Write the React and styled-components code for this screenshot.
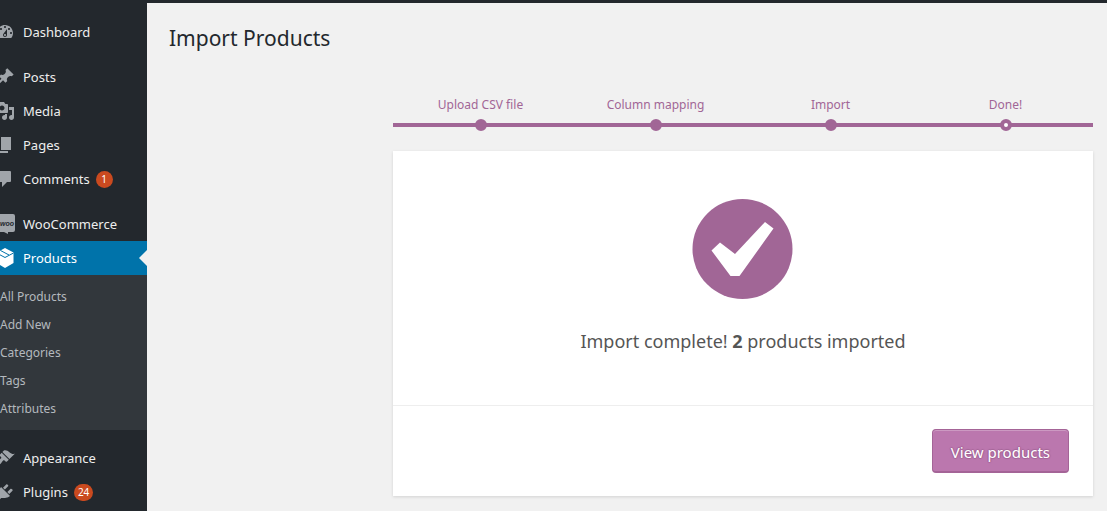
import styled, { createGlobalStyle, css } from "styled-components";

const GlobalStyle = createGlobalStyle`
  * {
    box-sizing: border-box;
  }
  body {
    margin: 0;
    background: #f1f1f1;
    color: #444;
    font-family: "Noto Sans", "Open Sans", sans-serif;
    font-size: 13px;
  }
`;

const Page = styled.div`
  min-height: 100vh;
  display: flex;
  flex-direction: column;
`;

const AdminBar = styled.div`
  height: 3px;
  background: #23282d;
`;

const Body = styled.div`
  flex: 1;
  display: flex;
`;

const Sidebar = styled.nav`
  flex: 0 0 147px;
  padding-top: 12px;
  background: #23282d;
  overflow: hidden;
`;

const Menu = styled.ul`
  margin: 0;
  padding: 0;
  list-style: none;
`;

const MenuItem = styled.li`
  margin-top: ${(props) => (props.$spaced ? "11px" : "0")};
`;

const MenuLink = styled.a`
  position: relative;
  display: flex;
  align-items: center;
  gap: 8px;
  height: 34px;
  color: #eee;
  font-size: 13px;
  line-height: 18px;
  text-decoration: none;
  white-space: nowrap;

  ${(props) =>
    props.$current &&
    css`
      background: #0073aa;
      color: #fff;

      &::after {
        content: "";
        position: absolute;
        right: 0;
        top: 9px;
        border: 8px solid transparent;
        border-left-width: 0;
        border-right-color: #f1f1f1;
      }
    `}
`;

const IconBox = styled.span`
  flex: 0 0 15px;
  display: flex;
  justify-content: flex-end;
  overflow: hidden;
  color: ${(props) => (props.$current ? "#fff" : "#a0a5aa")};

  svg {
    flex: none;
    fill: currentColor;
  }
`;

const Count = styled.span`
  min-width: 17px;
  height: 17px;
  margin-left: -2px;
  padding: 0 4px;
  border-radius: 9px;
  background: #ca4a1f;
  color: #fff;
  font-size: 10px;
  line-height: 17px;
  text-align: center;
`;

const SubMenu = styled.ul`
  margin: 0;
  padding: 8px 0 7px;
  background: #32373c;
  list-style: none;
`;

const SubLink = styled.a`
  display: block;
  color: #b4b9be;
  font-size: 12px;
  line-height: 28px;
  text-decoration: none;
`;

const Content = styled.main`
  flex: 1;
  min-width: 0;
  padding: 20px 14px 15px 22px;
`;

const Title = styled.h1`
  margin: 0;
  color: #23282d;
  font-size: 21px;
  font-weight: 400;
  line-height: 30px;
`;

const Wizard = styled.div`
  max-width: 700px;
  margin: 40px 0 0 auto;
`;

const Steps = styled.ol`
  display: flex;
  margin: 0 0 20px;
  padding: 0;
  list-style: none;
`;

const Step = styled.li`
  flex: 1;
  display: flex;
  flex-direction: column;
  align-items: center;
  color: #a16696;
  font-size: 12px;
  line-height: 24px;
`;

const Track = styled.div`
  align-self: stretch;
  display: flex;
  align-items: center;
  justify-content: center;
  height: 12px;
  margin-top: 2px;
  background: linear-gradient(#a16696, #a16696) center / 100% 4px no-repeat;
`;

const Dot = styled.span`
  width: 12px;
  height: 12px;
  border: 4px solid #a16696;
  border-radius: 50%;
  background: ${(props) => (props.$active ? "#fff" : "#a16696")};
`;

const Card = styled.section`
  background: #fff;
  box-shadow: 0 1px 3px rgba(0, 0, 0, 0.13);
`;

const Result = styled.div`
  display: flex;
  flex-direction: column;
  align-items: center;
  padding: 48px 24px;
`;

const Message = styled.p`
  margin: 27px 0 0;
  color: #555;
  font-size: 18px;
  line-height: 31px;
  text-align: center;
`;

const Actions = styled.div`
  display: flex;
  justify-content: flex-end;
  padding: 23px 24px;
  border-top: 1px solid #eee;
`;

const Button = styled.button`
  height: 44px;
  padding: 2px 18px 0;
  border: 1px solid #a46497;
  border-bottom-width: 2px;
  border-radius: 4px;
  background: #bb77ae;
  box-shadow: inset 0 1px 0 rgba(255, 255, 255, 0.25);
  color: #fff;
  font-family: inherit;
  font-size: 15px;
  text-shadow: 0 -1px 1px #a36597, 1px 0 1px #a36597, 0 1px 1px #a36597,
    -1px 0 1px #a36597;
  cursor: pointer;
`;

const icons = {
  dashboard: (
    <path
      fillRule="evenodd"
      d="M3.76 16h12.48c1.1-1.37 1.76-3.11 1.76-5 0-4.42-3.58-8-8-8s-8 3.58-8 8c0 1.89.66 3.63 1.76 5zM10 4c.55 0 1 .45 1 1s-.45 1-1 1-1-.45-1-1 .45-1 1-1zM6 6c.55 0 1 .45 1 1s-.45 1-1 1-1-.45-1-1 .45-1 1-1zm8 0c.55 0 1 .45 1 1s-.45 1-1 1-1-.45-1-1 .45-1 1-1zm-5.37 5.55L12 7v6c0 1.1-.9 2-2 2s-2-.9-2-2c0-.57.24-1.08.63-1.45zM4 10c.55 0 1 .45 1 1s-.45 1-1 1-1-.45-1-1 .45-1 1-1zm12 0c.55 0 1 .45 1 1s-.45 1-1 1-1-.45-1-1 .45-1 1-1zm-5 3c0-.55-.45-1-1-1s-1 .45-1 1 .45 1 1 1 1-.45 1-1z"
    />
  ),
  posts: (
    <path d="M10.44 3.02l1.82-1.82 6.36 6.35-1.83 1.82c-1.05-.68-2.48-.57-3.41.36l-.75.75c-.92.93-1.04 2.35-.35 3.41l-1.83 1.82-2.41-2.41-2.8 2.79c-.42.42-3.38 2.71-3.8 2.29s1.86-3.39 2.28-3.81l2.79-2.79L4.1 9.36l1.83-1.82c1.05.69 2.48.57 3.4-.36l.75-.75c.93-.92 1.05-2.35.36-3.41z" />
  ),
  media: (
    <path
      fillRule="evenodd"
      d="M13 11V4c0-.55-.45-1-1-1h-1.67L9 1H5L3.67 3H2c-.55 0-1 .45-1 1v7c0 .55.45 1 1 1h10c.55 0 1-.45 1-1zM7 4.5c1.38 0 2.5 1.12 2.5 2.5S8.38 9.5 7 9.5 4.5 8.38 4.5 7 5.62 4.5 7 4.5zM14 6h5v10.5c0 1.38-1.12 2.5-2.5 2.5S14 17.88 14 16.5s1.12-2.5 2.5-2.5c.17 0 .34.02.5.05V9h-3V6zm-4 8.05V13h2v3.5c0 1.38-1.12 2.5-2.5 2.5S7 17.88 7 16.5 8.12 14 9.5 14c.17 0 .34.02.5.05z"
    />
  ),
  pages: <path d="M6 15V2h10v13H6zm-1 1h8v2H3V5h2v11z" />,
  comments: (
    <path d="M5 2h10a1 1 0 0 1 1 1v9a1 1 0 0 1-1 1h-3l-5 5v-5H5c-1.100 0-2-.9-2-2V4c0-1.100.9-2 2-2z" />
  ),
  woocommerce: (
    <>
      <path d="M2 0h16a2 2 0 0 1 2 2v14a2 2 0 0 1-2 2h-5v2l-4-2H2a2 2 0 0 1-2-2V2a2 2 0 0 1 2-2z" />
      <text
        x="5"
        y="12"
        fill="#23282d"
        fontFamily="'Liberation Sans', sans-serif"
        fontSize="7"
        fontStyle="italic"
        fontWeight="700"
      >
        woo
      </text>
    </>
  ),
  products: (
    <>
      <path d="M10 0l8.500 4.500v10.500L10 20l-8.500-5v-10.500z" />
      <path
        d="M1.500 5L10 9.500 18.500 5M5.500 2.500l8.500 4.500"
        fill="none"
        stroke="#0073aa"
        strokeWidth="1"
      />
    </>
  ),
  appearance: (
    <path d="M14.48 11.06L7.41 3.99l1.5-1.5c.5-.56 2.3-.47 3.51.32 1.21.8 1.43 1.28 2.91 2.1 1.18.64 2.45 1.26 4.45.85zm-.71.71L6.7 4.7 4.93 6.47c-.39.39-.39 1.02 0 1.41l1.06 1.06c.39.39.39 1.03 0 1.42-.6.6-1.43 1.11-2.21 1.69-.35.26-.7.53-1.01.84C1.43 14.23.4 16.08 1.4 17.07c.99 1 2.84-.03 4.18-1.36.31-.31.58-.66.85-1.02.57-.78 1.08-1.61 1.69-2.21.39-.39 1.02-.39 1.41 0l1.06 1.06c.39.39 1.02.39 1.41 0z" />
  ),
  plugins: (
    <path d="M13.11 4.36L9.87 7.6 8 5.73l3.24-3.24c.35-.34 1.05-.2 1.56.32.52.51.66 1.21.31 1.55zm-8 1.77l.91-1.12 9.01 9.01-1.19.84c-.71.71-2.63 1.16-3.82 1.16H6.14L4.9 17.26c-.59.59-1.54.59-2.12 0-.59-.58-.59-1.53 0-2.12l1.24-1.24v-3.88c0-1.13.4-3.19 1.09-3.89zm7.26 3.97l3.24-3.24c.34-.35 1.04-.21 1.55.31.52.51.66 1.21.31 1.55l-3.24 3.25z" />
  ),
};

const menu = [
  { label: "Dashboard", icon: "dashboard" },
  { label: "Posts", icon: "posts", spaced: true },
  { label: "Media", icon: "media" },
  { label: "Pages", icon: "pages" },
  { label: "Comments", icon: "comments", count: 1 },
  { label: "WooCommerce", icon: "woocommerce", spaced: true },
  {
    label: "Products",
    icon: "products",
    current: true,
    children: ["All Products", "Add New", "Categories", "Tags", "Attributes"],
  },
  { label: "Appearance", icon: "appearance", spaced: true },
  { label: "Plugins", icon: "plugins", count: 24 },
];

const steps = ["Upload CSV file", "Column mapping", "Import", "Done!"];

const AdminMenu = () => {
  return (
    <Sidebar>
      <Menu>
        {menu.map((item) => (
          <MenuItem key={item.label} $spaced={item.spaced}>
            <MenuLink href="#" $current={item.current}>
              <IconBox $current={item.current}>
                <svg width="20" height="20" viewBox="0 0 20 20" aria-hidden="true">
                  {icons[item.icon]}
                </svg>
              </IconBox>
              {item.label}
              {item.count && <Count>{item.count}</Count>}
            </MenuLink>
            {item.children && (
              <SubMenu>
                {item.children.map((child) => (
                  <li key={child}>
                    <SubLink href="#">{child}</SubLink>
                  </li>
                ))}
              </SubMenu>
            )}
          </MenuItem>
        ))}
      </Menu>
    </Sidebar>
  );
};

const App = () => {
  return (
    <Page>
      <GlobalStyle />
      <AdminBar />
      <Body>
        <AdminMenu />
        <Content>
          <Title>Import Products</Title>
          <Wizard>
            <Steps>
              {steps.map((step, index) => (
                <Step key={step}>
                  {step}
                  <Track>
                    <Dot $active={index === steps.length - 1} />
                  </Track>
                </Step>
              ))}
            </Steps>
            <Card>
              <Result>
                <svg width="102" height="100" viewBox="0 0 102 100" aria-hidden="true">
                  <circle cx="50.5" cy="50" r="50" fill="#a16696" />
                  <path
                    d="M19.500 51.500L28 43.500L43 55L73 23L81.500 29.500L47.500 77H38.500z"
                    fill="#fff"
                  />
                </svg>
                <Message>
                  Import complete! <strong>2</strong> products imported
                </Message>
              </Result>
              <Actions>
                <Button type="button">View products</Button>
              </Actions>
            </Card>
          </Wizard>
        </Content>
      </Body>
    </Page>
  );
};

export default App;
